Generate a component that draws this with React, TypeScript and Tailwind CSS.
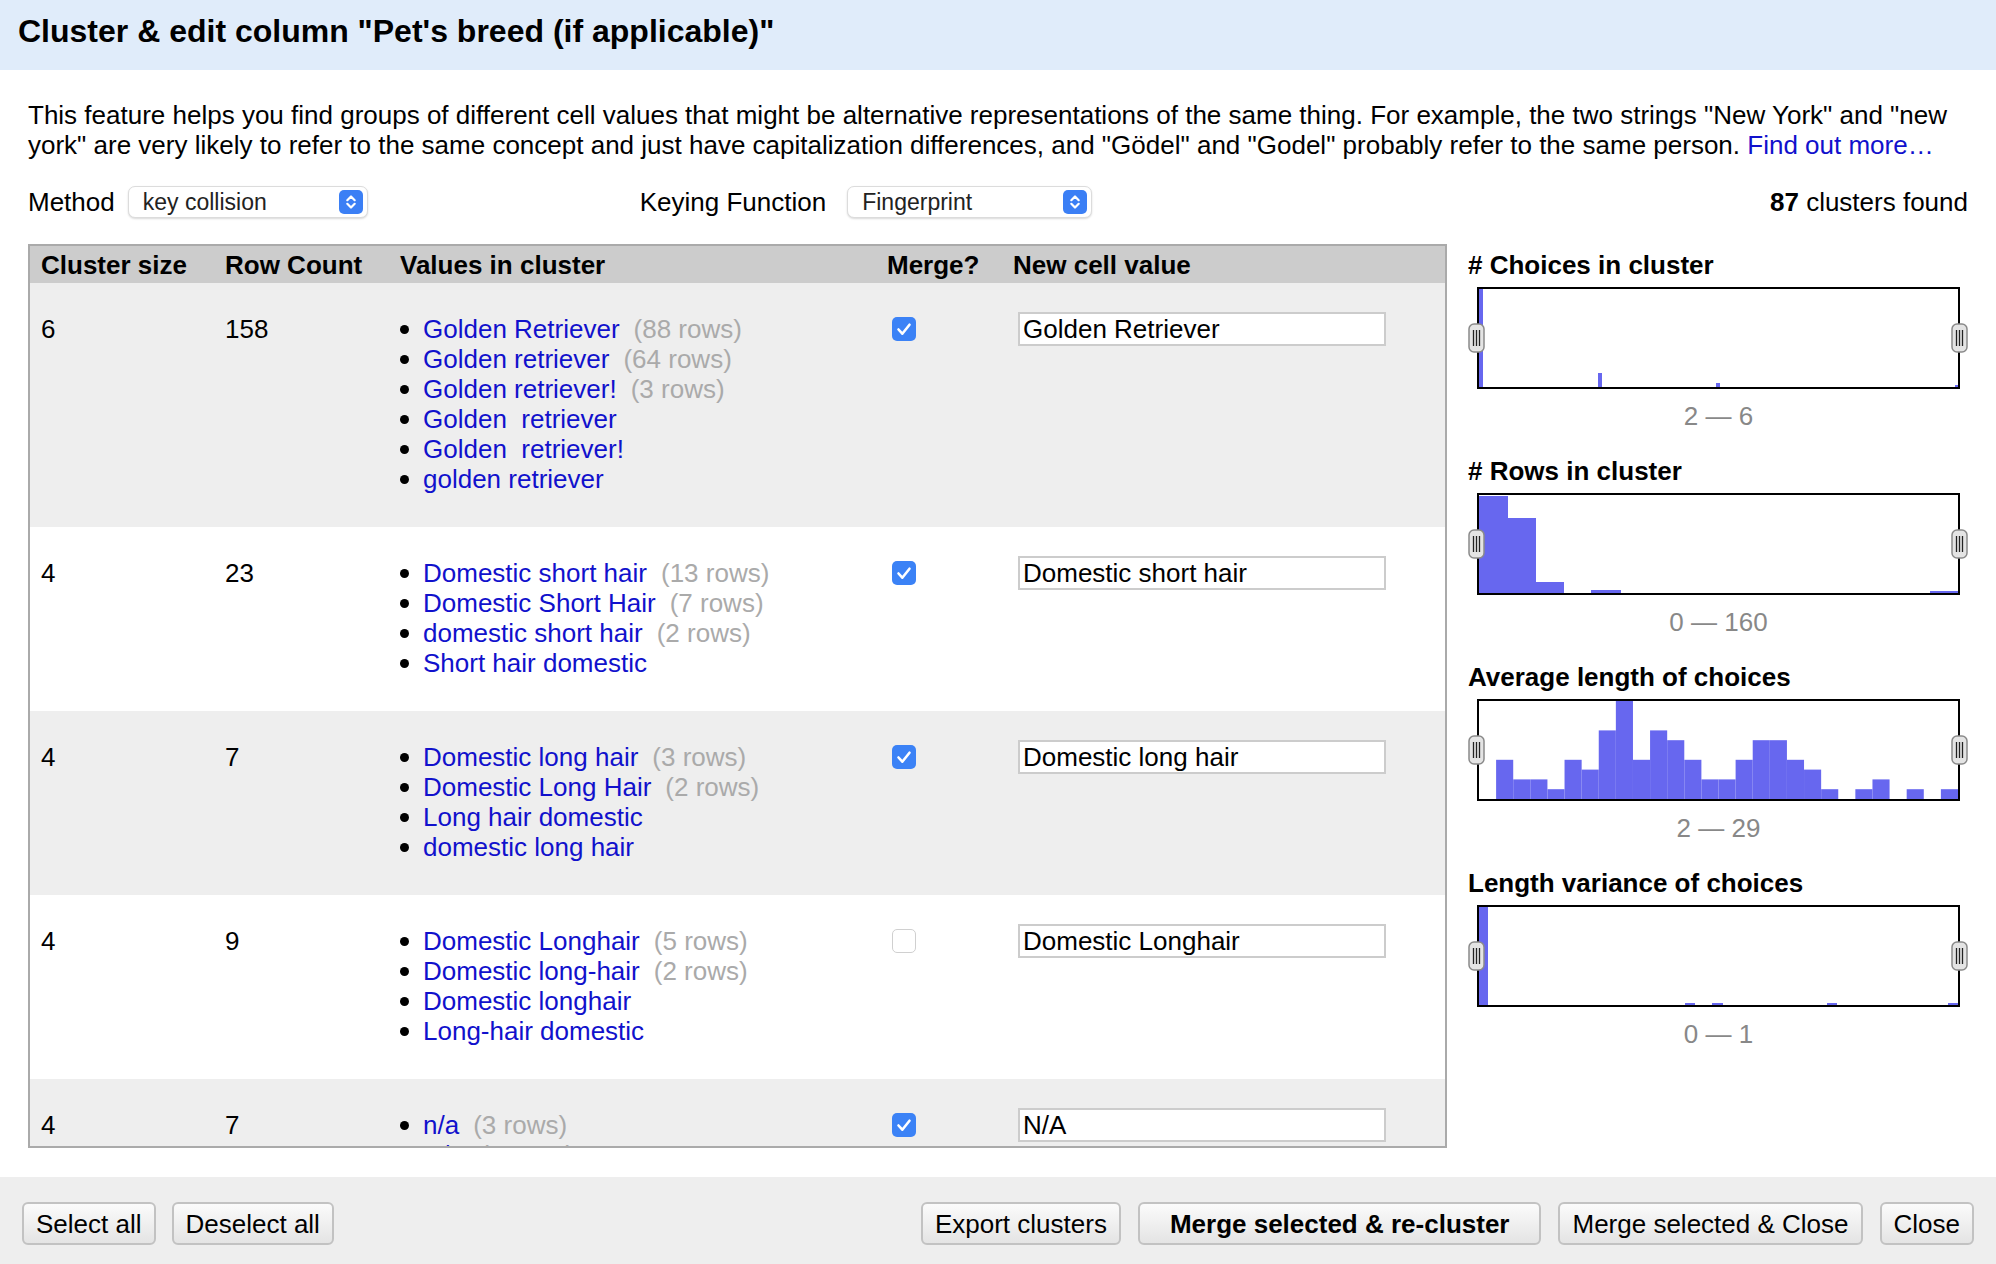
import React from "react";

type Cluster = {
  size: number;
  count: number;
  values: [string, string?][];
  merge: boolean;
  value: string;
};

const clusters: Cluster[] = [
  {
    size: 6,
    count: 158,
    values: [
      ["Golden Retriever", "88"],
      ["Golden retriever", "64"],
      ["Golden retriever!", "3"],
      ["Golden  retriever"],
      ["Golden  retriever!"],
      ["golden retriever"],
    ],
    merge: true,
    value: "Golden Retriever",
  },
  {
    size: 4,
    count: 23,
    values: [
      ["Domestic short hair", "13"],
      ["Domestic Short Hair", "7"],
      ["domestic short hair", "2"],
      ["Short hair domestic"],
    ],
    merge: true,
    value: "Domestic short hair",
  },
  {
    size: 4,
    count: 7,
    values: [
      ["Domestic long hair", "3"],
      ["Domestic Long Hair", "2"],
      ["Long hair domestic"],
      ["domestic long hair"],
    ],
    merge: true,
    value: "Domestic long hair",
  },
  {
    size: 4,
    count: 9,
    values: [
      ["Domestic Longhair", "5"],
      ["Domestic long-hair", "2"],
      ["Domestic longhair"],
      ["Long-hair domestic"],
    ],
    merge: false,
    value: "Domestic Longhair",
  },
  {
    size: 4,
    count: 7,
    values: [["n/a", "3"], ["N/A", "2"], ["NA"], ["na"]],
    merge: true,
    value: "N/A",
  },
];

// bar = [x, width, height] inside a 479x98 plot
type Bar = [number, number, number];

const avgCounts = [0, 4, 2, 2, 1, 4, 3, 7, 10, 4, 7, 6, 4, 2, 2, 4, 6, 6, 4, 3, 1, 0, 1, 2, 0, 1, 0, 1];
const binW = 479 / avgCounts.length;

const facets: { title: string; range: string; bars: Bar[] }[] = [
  {
    title: "# Choices in cluster",
    range: "2 — 6",
    bars: [
      [0, 4, 98],
      [119, 4, 14],
      [237, 4, 4],
      [476, 3, 2],
    ],
  },
  {
    title: "# Rows in cluster",
    range: "0 — 160",
    bars: [
      [0, 29, 97],
      [29, 28, 75],
      [57, 28, 11],
      [112, 30, 3],
      [451, 28, 2],
    ],
  },
  {
    title: "Average length of choices",
    range: "2 — 29",
    bars: avgCounts.map((c, i) => [i * binW, binW, c * 9.8] as Bar),
  },
  {
    title: "Length variance of choices",
    range: "0 — 1",
    bars: [
      [0, 9, 98],
      [206, 10, 2],
      [233, 11, 2],
      [348, 10, 2],
      [469, 10, 2],
    ],
  },
];

const Stepper = () => (
  <svg width="24" height="24" viewBox="0 0 24 24" className="shrink-0">
    <rect width="24" height="24" rx="5" fill="#3b7ff5" />
    <path d="M8.3 10.2l3.7-3.7 3.7 3.7M8.3 13.8l3.7 3.7 3.7-3.7" fill="none" stroke="#fff" strokeWidth="2.2" strokeLinecap="round" strokeLinejoin="round" />
  </svg>
);

const Select = ({ label, width }: { label: string; width: string }) => (
  <div className={`flex h-[32px] items-center justify-between rounded-[7px] border border-[#dcdcdc] bg-white pl-[14px] pr-[4px] shadow-[0_1px_2px_rgba(0,0,0,0.15)] ${width}`}>
    <span className="text-[23px] leading-none text-[#222]">{label}</span>
    <Stepper />
  </div>
);

const Checkbox = ({ checked }: { checked: boolean }) =>
  checked ? (
    <svg width="24" height="24" viewBox="0 0 24 24">
      <rect width="24" height="24" rx="5" fill="#3b82f6" />
      <path d="M6.5 12.5l3.8 4.2 7.2-9" fill="none" stroke="#fff" strokeWidth="2.6" strokeLinecap="round" strokeLinejoin="round" />
    </svg>
  ) : (
    <div className="h-[24px] w-[24px] rounded-[5px] border-[1.5px] border-[#d0d0d0] bg-white" />
  );

const Handle = ({ side }: { side: "left" | "right" }) => (
  <svg
    width="17"
    height="30"
    viewBox="0 0 17 30"
    className={`absolute top-[34px] ${side === "left" ? "left-[-11px]" : "right-[-10px]"}`}
  >
    <rect x="1" y="1" width="15" height="28" rx="5" fill="#e4e4e4" stroke="#8a8a8a" strokeWidth="1.5" />
    <path d="M5.5 7v16M8.5 7v16M11.5 7v16" stroke="#222" strokeWidth="1.3" />
  </svg>
);

const Histogram = ({ bars }: { bars: Bar[] }) => (
  <div className="relative ml-[9px] h-[102px] w-[483px] border-2 border-black bg-white">
    <svg width="479" height="98" viewBox="0 0 479 98" className="block">
      {bars.map(([x, w, h], i) =>
        h > 0 ? <rect key={i} x={x} y={98 - h} width={w} height={h} fill="#6767ef" /> : null,
      )}
    </svg>
    <Handle side="left" />
    <Handle side="right" />
  </div>
);

const Button = ({ children, bold }: { children: React.ReactNode; bold?: boolean }) => (
  <button
    className={`h-[43px] rounded-[6px] border-2 border-[#c2c2c2] bg-gradient-to-b from-[#fbfbfb] to-[#e4e4e4] text-[26px] leading-none text-black ${
      bold ? "px-[30px] font-bold" : "px-[12px]"
    }`}
  >
    {children}
  </button>
);

export default function App() {
  return (
    <div className="flex h-screen w-full flex-col overflow-hidden bg-white font-[family-name:'Liberation_Sans',Arial,sans-serif] text-[26px] leading-[30px] text-black">
      <header className="flex h-[70px] shrink-0 items-center bg-[#e0ecfa] px-[18px] pb-[8px]">
        <h1 className="text-[32px] font-bold leading-[37px]">Cluster &amp; edit column "Pet's breed (if applicable)"</h1>
      </header>

      <main className="px-[28px] pt-[30px]">
        <p>
          This feature helps you find groups of different cell values that might be alternative representations of the same thing. For example, the two strings "New York" and "new york" are very likely to refer to the same concept and just have capitalization differences, and "Gödel" and "Godel" probably refer to the same person.{" "}
          <a className="text-[#1111cc]">Find out more…</a>
        </p>

        <div className="mt-[26px] flex h-[32px] items-center">
          <span>Method</span>
          <div className="ml-[13px]">
            <Select label="key collision" width="w-[240px]" />
          </div>
          <span className="ml-[272px]">Keying Function</span>
          <div className="ml-[21px]">
            <Select label="Fingerprint" width="w-[245px]" />
          </div>
          <span className="ml-auto">
            <b>87</b> clusters found
          </span>
        </div>

        <div className="mt-[26px] flex items-start gap-[21px]">
          {/* clusters table */}
          <div className="w-[1419px] shrink-0 border-2 border-[#aaaaaa]">
            <div className="grid h-[37px] grid-cols-[184px_175px_487px_126px_1fr] items-center bg-[#cccccc] font-bold">
              <div className="pl-[11px]">Cluster size</div>
              <div className="pl-[11px]">Row Count</div>
              <div className="pl-[11px]">Values in cluster</div>
              <div className="pl-[11px]">Merge?</div>
              <div className="pl-[11px]">New cell value</div>
            </div>
            <div className="h-[863px] overflow-hidden">
              {clusters.map((c, i) => (
                <div
                  key={i}
                  className={`grid grid-cols-[184px_175px_487px_126px_1fr] items-start pt-[31px] pb-[33px] ${
                    i % 2 === 0 ? "bg-[#eeeeee]" : "bg-white"
                  }`}
                >
                  <div className="pl-[11px]">{c.size}</div>
                  <div className="pl-[11px]">{c.count}</div>
                  <ul className="pl-[11px]">
                    {c.values.map(([v, rows], j) => (
                      <li key={j} className="flex items-center">
                        <span className="mr-[14px] h-[9px] w-[9px] shrink-0 rounded-full bg-black" />
                        <span className="whitespace-pre text-[#1111cc]">{v}</span>
                        {rows && <span className="ml-[14px] text-[#aaaaaa]">({rows} rows)</span>}
                      </li>
                    ))}
                  </ul>
                  <div className="flex h-[30px] items-center pl-[16px]">
                    <Checkbox checked={c.merge} />
                  </div>
                  <div className="flex h-[30px] items-center pl-[16px]">
                    <input
                      readOnly
                      value={c.value}
                      className="h-[34px] w-[368px] shrink-0 border-2 border-[#cccccc] bg-white px-[3px] text-[26px] text-black outline-none"
                    />
                  </div>
                </div>
              ))}
            </div>
          </div>

          {/* facets */}
          <aside className="w-[500px] shrink-0 pt-[6px]">
            {facets.map((f, i) => (
              <section key={i} className="pb-[25px]">
                <h3 className="font-bold">{f.title}</h3>
                <div className="mt-[7px]">
                  <Histogram bars={f.bars} />
                </div>
                <div className="mt-[12px] w-[501px] text-center text-[#888888]">{f.range}</div>
              </section>
            ))}
          </aside>
        </div>
      </main>

      <footer className="mt-auto flex h-[87px] shrink-0 items-start gap-[16px] bg-[#eeeeee] px-[22px] pt-[25px]">
        <Button>Select all</Button>
        <Button>Deselect all</Button>
        <div className="ml-auto flex gap-[17px]">
          <Button>Export clusters</Button>
          <Button bold>Merge selected &amp; re-cluster</Button>
          <Button>Merge selected &amp; Close</Button>
          <Button>Close</Button>
        </div>
      </footer>
    </div>
  );
}
